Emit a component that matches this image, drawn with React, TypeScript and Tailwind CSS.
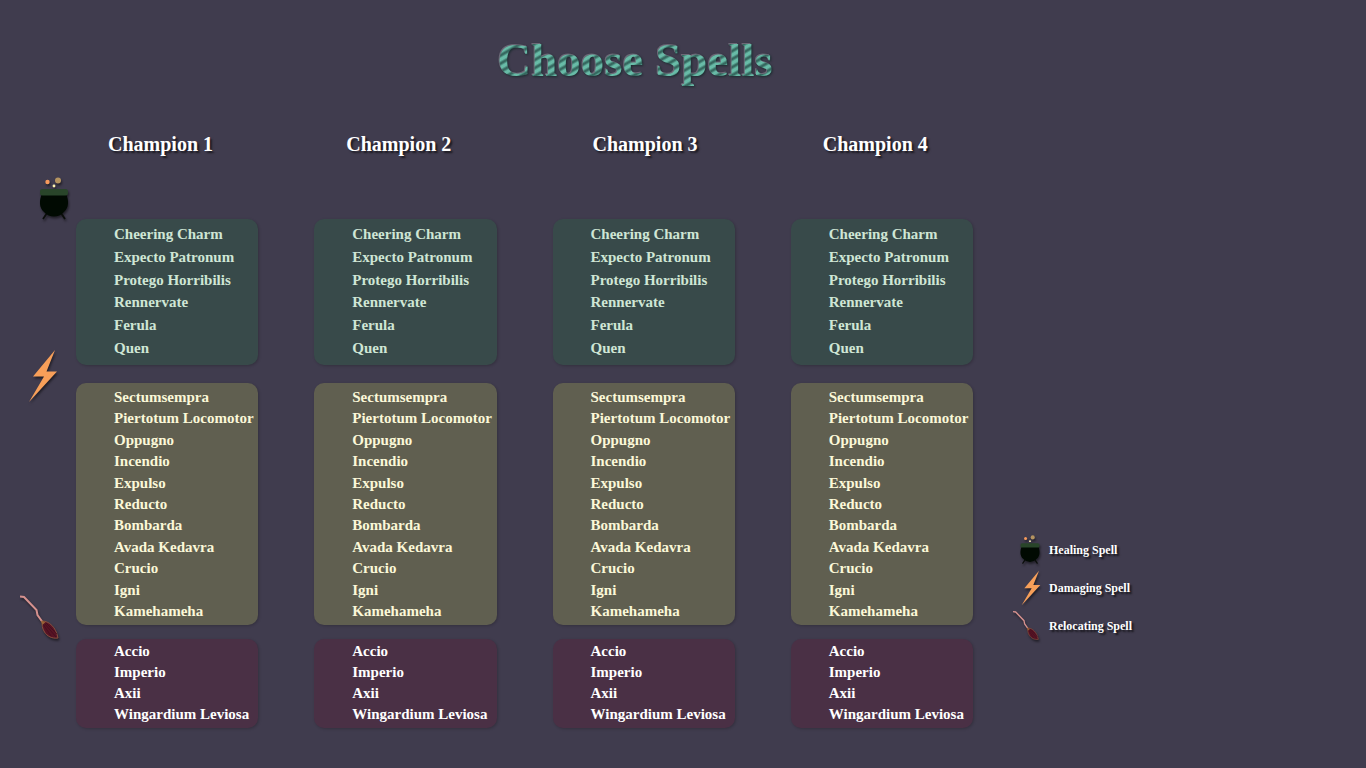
type IconProps = { className: string };

function Cauldron({ className }: IconProps) {
  return (
    <svg viewBox="0 0 32 44" className={className} aria-hidden="true">
      <circle cx="9.500" cy="5" r="2.200" fill="#f79a5c" />
      <circle cx="20" cy="3.500" r="3" fill="#b59460" />
      <circle cx="16" cy="9" r="1.400" fill="#fdf3b0" />
      <path d="M9 36 5 42M23 36 27 42" stroke="#0a0d0a" strokeWidth="1.800" />
      <path d="M4 17C1 23 1 31 6 35C9 38 12 39.500 16 39.500S23 38 26 35C31 31 31 23 28 17Z" fill="#010a02" />
      <rect x="2" y="12" width="28" height="6.500" rx="2.500" fill="#29452a" />
    </svg>
  );
}

function Bolt({ className }: IconProps) {
  return (
    <svg viewBox="0 0 30 54" className={className} aria-hidden="true">
      <path d="M27 1 5 27.500H16L1 53 29 22.500H18.500Z" fill="#f79f59" />
    </svg>
  );
}

function Broom({ className }: IconProps) {
  return (
    <svg viewBox="0 0 42 46" className={className} aria-hidden="true">
      <path d="M0 1.500 4 2 16.500 15 17.500 20 22.500 27" fill="none" stroke="#d6928f" strokeWidth="2" />
      <path d="M22 26C29 26 36 32 38 43C32 44 27 41 24.500 37C22 33 22 30 22 26Z" fill="#571324" stroke="#8a5140" strokeWidth="1" />
      <path d="M25 29 36 42M23 29 31 41M26 28 37 39" stroke="#3f0d1c" strokeWidth="0.700" />
      <path d="M21 25.500 25.500 27 22.500 30Z" fill="#9a6436" />
    </svg>
  );
}

const healing = ["Cheering Charm", "Expecto Patronum", "Protego Horribilis", "Rennervate", "Ferula", "Quen"];
const damaging = [
  "Sectumsempra",
  "Piertotum Locomotor",
  "Oppugno",
  "Incendio",
  "Expulso",
  "Reducto",
  "Bombarda",
  "Avada Kedavra",
  "Crucio",
  "Igni",
  "Kamehameha",
];
const relocating = ["Accio", "Imperio", "Axii", "Wingardium Leviosa"];

const champions = [
  { name: "Champion 1", indent: "pl-8" },
  { name: "Champion 2", indent: "pl-8" },
  { name: "Champion 3", indent: "pl-10" },
  { name: "Champion 4", indent: "pl-8" },
];

function SpellList({ label, spells, className }: { label: string; spells: string[]; className: string }) {
  return (
    <ul
      aria-label={label}
      className={`grid auto-rows-fr rounded-[10px] pl-[38px] text-[15px] font-bold shadow-[1px_1px_3px_rgba(0,0,0,0.2)] ${className}`}
    >
      {spells.map((spell) => (
        <li key={spell} className="flex items-center leading-5">
          <button type="button" className="cursor-pointer whitespace-nowrap">
            {spell}
          </button>
        </li>
      ))}
    </ul>
  );
}

const iconShadow = "drop-shadow-[1px_2px_1px_rgba(0,0,0,0.5)]";

export default function App() {
  return (
    <div className="min-h-screen bg-[#403c4e] font-['Liberation_Serif',serif] text-white">
      <header className="flex h-[120px] justify-center pt-7 pr-24">
        <div className="drop-shadow-[1px_1px_1px_#1d2b30]">
          <h1 className="bg-[repeating-linear-gradient(150deg,#68bba7_0px,#68bba7_2px,#35685f_4px,#35685f_5px,#68bba7_7px)] bg-clip-text text-[47px] leading-[64px] font-bold text-transparent drop-shadow-[-1px_-1px_0px_#6d6877]">
            Choose Spells
          </h1>
        </div>
      </header>
      <main className="flex items-start">
        <div className="w-[76px] shrink-0">
          <Cauldron className={`mt-[57px] ml-[38px] h-11 w-8 ${iconShadow}`} />
          <Bolt className={`mt-32 ml-7 h-[54px] w-[30px] ${iconShadow}`} />
          <Broom className={`mt-48 ml-5 h-[46px] w-[42px] ${iconShadow}`} />
        </div>
        <div className="grid min-w-0 flex-1 grid-cols-4 gap-x-14">
          {champions.map((champion) => (
            <section key={champion.name}>
              <h2
                className={`h-[99px] pt-2 text-xl leading-8 font-bold [text-shadow:2px_2px_2px_rgba(0,0,0,0.6)] ${champion.indent}`}
              >
                {champion.name}
              </h2>
              <SpellList label="Healing spells" spells={healing} className="h-[146px] bg-[#384a4a] pt-1 pb-[6px] text-[#cfe6d5]" />
              <SpellList
                label="Damaging spells"
                spells={damaging}
                className="mt-[18px] h-[242px] bg-[#605f50] py-[3px] text-[#fbf8d8]"
              />
              <SpellList label="Relocating spells" spells={relocating} className="mt-[14px] h-[89px] bg-[#4a3045] pt-[1px] pb-[3px]" />
            </section>
          ))}
        </div>
        <ul className="mt-[411px] w-[393px] shrink-0 pl-10 text-xs leading-4 font-bold [text-shadow:2px_2px_2px_rgba(0,0,0,0.7)]">
          <li className="flex h-[38px] items-center gap-2">
            <span className="flex w-7 justify-end">
              <Cauldron className={`h-[30px] w-[22px] ${iconShadow}`} />
            </span>
            Healing Spell
          </li>
          <li className="flex h-[38px] items-center gap-2">
            <span className="flex w-7 justify-end">
              <Bolt className={`h-9 w-5 ${iconShadow}`} />
            </span>
            Damaging Spell
          </li>
          <li className="flex h-[38px] items-center gap-2">
            <span className="flex w-7 justify-end">
              <Broom className={`h-8 w-7 ${iconShadow}`} />
            </span>
            Relocating Spell
          </li>
        </ul>
      </main>
    </div>
  );
}
